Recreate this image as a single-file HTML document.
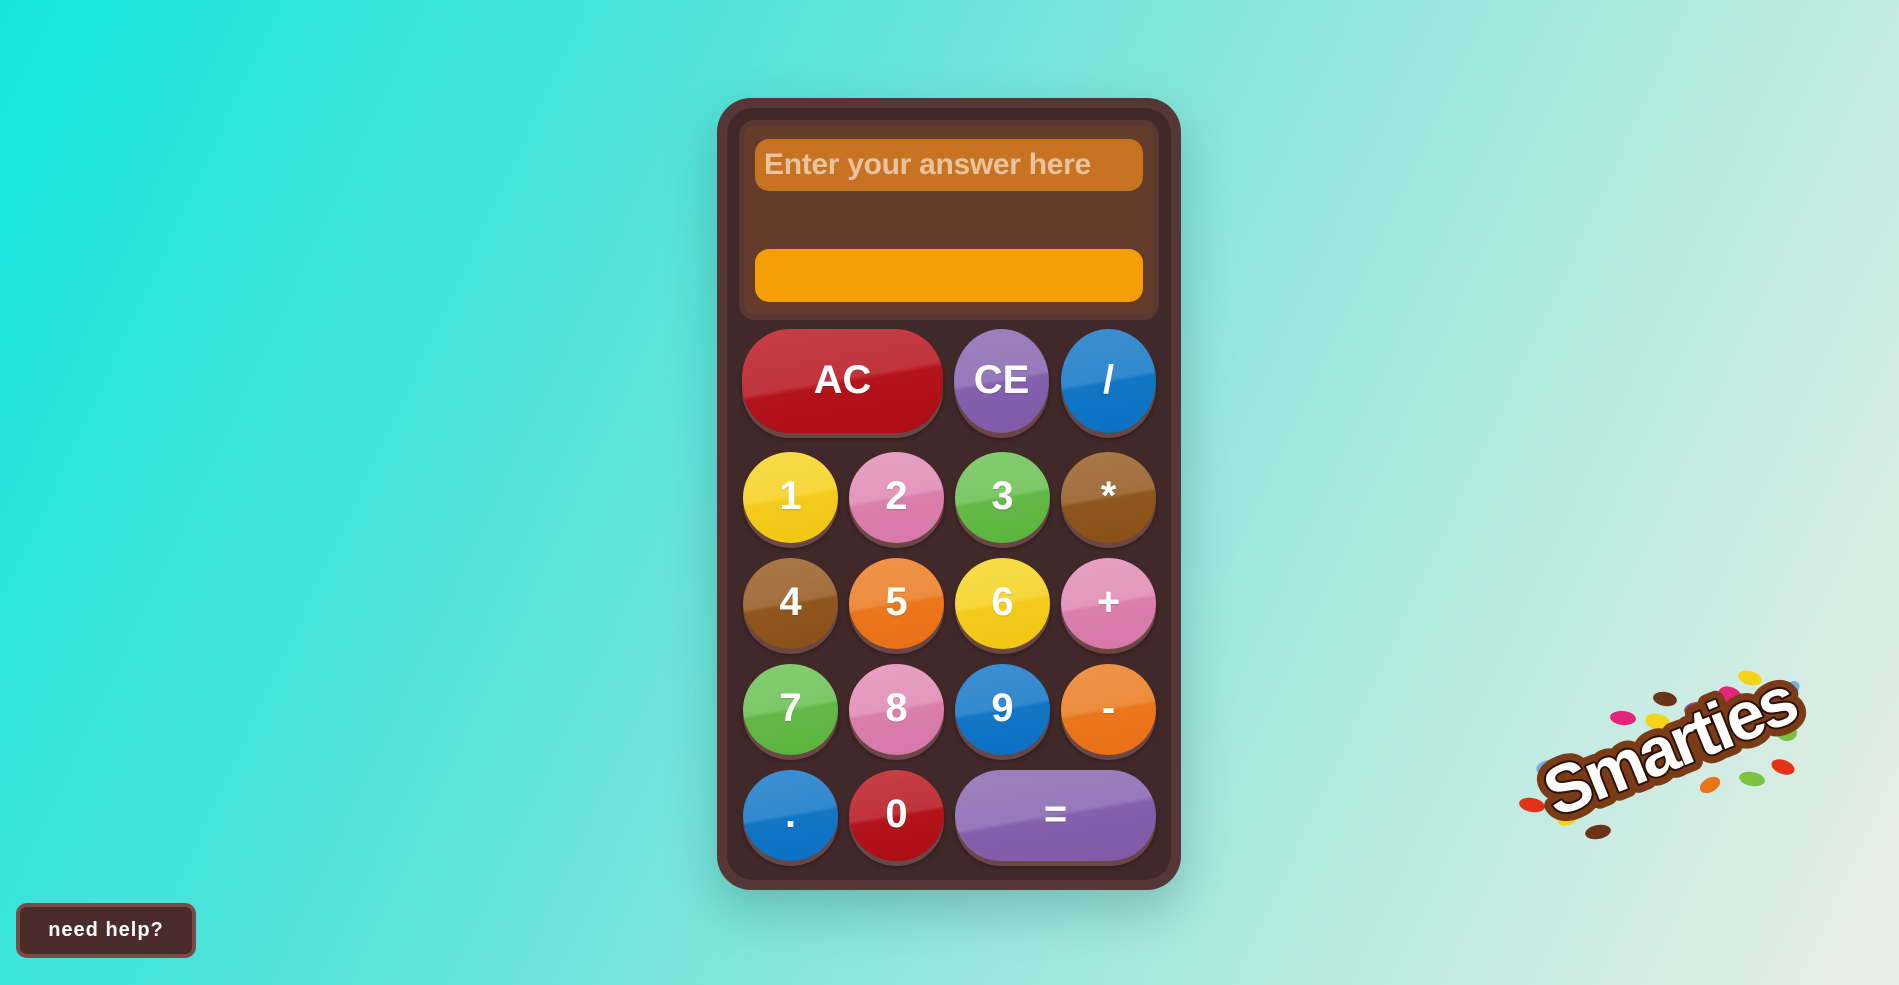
<!DOCTYPE html>
<html><head><meta charset="utf-8"><style>
*{margin:0;padding:0;box-sizing:border-box}
body{width:1899px;height:985px;overflow:hidden;position:relative;font-family:"Liberation Sans",sans-serif;
background:linear-gradient(115deg,#14e6dc 0%,#4fe3da 30%,#8ce6dc 55%,#c0ebe2 80%,#ebeee4 100%);}
.calc{position:absolute;left:717px;top:98px;width:464px;height:792px;background:#573735;border-radius:34px;box-shadow:0 20px 50px rgba(0,60,60,.25)}
.ring{position:absolute;left:10px;top:10px;right:10px;bottom:10px;background:#412829;border-radius:26px}
.panel{position:absolute;left:739px;top:120px;width:420px;height:200px;background:#633c2b;border:5px solid #5a3832;border-radius:16px}
.inp{position:absolute;left:755px;top:139px;width:388px;height:52px;background:#c77321;border-radius:14px;color:#ebc49e;font-weight:bold;font-size:30px;line-height:52px;padding-left:9px;letter-spacing:-.3px}
.bar{position:absolute;left:755px;top:249px;width:388px;height:53px;background:#f59e05;border-radius:14px}
.b{position:absolute;width:95px;height:91px;border-radius:50%;color:#fff;font-weight:bold;font-size:40px;text-align:center;line-height:88px;
box-shadow:0 5px 0 #6a4744,0 6px 4px rgba(0,0,0,.35);text-shadow:0 1px 1px rgba(0,0,0,.15)}
.w{border-radius:48px}
.red{background:linear-gradient(170deg,#c73f45 0%,#c1343c 48%,#b3141c 52%,#ad0c15 100%)}
.pur{background:linear-gradient(170deg,#9c80be 0%,#967abb 48%,#8560ad 52%,#7f5aa8 100%)}
.blu{background:linear-gradient(170deg,#3a90d0 0%,#3389cd 48%,#1276c5 52%,#0b70c2 100%)}
.yel{background:linear-gradient(170deg,#f7dc48 0%,#f6d73c 48%,#f3cb1c 52%,#f1c614 100%)}
.pnk{background:linear-gradient(170deg,#e6a0c3 0%,#e497bd 48%,#da7eac 52%,#d677a8 100%)}
.grn{background:linear-gradient(170deg,#84cc70 0%,#7cc868 48%,#62b846 52%,#5bb43f 100%)}
.brn{background:linear-gradient(170deg,#a97947 0%,#a2703e 48%,#8f561e 52%,#8a5018 100%)}
.org{background:linear-gradient(170deg,#ef944a 0%,#ee8c3e 48%,#ea761c 52%,#e96f15 100%)}
.help{position:absolute;left:16px;top:903px;width:180px;height:55px;background:#4a2c2b;border:4px solid #7b4b48;border-radius:11px;color:#fff;font-weight:bold;font-size:20px;line-height:47px;text-align:center;letter-spacing:1px}
</style></head><body>
<div class="calc"><div class="ring"></div></div>
<div class="panel"></div>
<div class="inp">Enter your answer here</div>
<div class="bar"></div>

<div class="b red w" style="left:742px;top:329px;width:201px;height:104px;line-height:102px">AC</div>
<div class="b pur" style="left:954px;top:329px;height:104px;line-height:102px">CE</div>
<div class="b blu" style="left:1061px;top:329px;height:104px;line-height:102px">/</div>

<div class="b yel" style="left:743px;top:452px">1</div>
<div class="b pnk" style="left:849px;top:452px">2</div>
<div class="b grn" style="left:955px;top:452px">3</div>
<div class="b brn" style="left:1061px;top:452px">*</div>

<div class="b brn" style="left:743px;top:558px">4</div>
<div class="b org" style="left:849px;top:558px">5</div>
<div class="b yel" style="left:955px;top:558px">6</div>
<div class="b pnk" style="left:1061px;top:558px">+</div>

<div class="b grn" style="left:743px;top:664px">7</div>
<div class="b pnk" style="left:849px;top:664px">8</div>
<div class="b blu" style="left:955px;top:664px">9</div>
<div class="b org" style="left:1061px;top:664px">-</div>

<div class="b blu" style="left:743px;top:770px">.</div>
<div class="b red" style="left:849px;top:770px">0</div>
<div class="b pur w" style="left:955px;top:770px;width:201px">=</div>

<div class="help">need help?</div>

<svg style="position:absolute;left:1500px;top:650px" width="320" height="200" viewBox="0 0 320 200">
<g>
<ellipse cx="250" cy="28" rx="12" ry="7" fill="#f3d31c" transform="rotate(15 250 28)"/>
<ellipse cx="290" cy="40" rx="11" ry="7" fill="#6fb3e6" transform="rotate(-40 290 40)"/>
<ellipse cx="230" cy="45" rx="12" ry="8" fill="#e2277a" transform="rotate(20 230 45)"/>
<ellipse cx="165" cy="49" rx="12" ry="7" fill="#6b3318" transform="rotate(10 165 49)"/>
<ellipse cx="196" cy="59" rx="12" ry="7" fill="#8a4ca0" transform="rotate(-10 196 59)"/>
<ellipse cx="123" cy="68" rx="13" ry="7" fill="#e2277a" transform="rotate(5 123 68)"/>
<ellipse cx="158" cy="72" rx="13" ry="8" fill="#f3d31c" transform="rotate(15 158 72)"/>
<ellipse cx="287" cy="83" rx="10" ry="8" fill="#7bc242"/>
<ellipse cx="48" cy="117" rx="12" ry="7" fill="#6fb3e6" transform="rotate(-15 48 117)"/>
<ellipse cx="283" cy="117" rx="12" ry="7" fill="#e23218" transform="rotate(20 283 117)"/>
<ellipse cx="252" cy="129" rx="13" ry="7" fill="#7bc242" transform="rotate(10 252 129)"/>
<ellipse cx="68" cy="145" rx="11" ry="7" fill="#8a4ca0"/>
<ellipse cx="32" cy="155" rx="13" ry="7" fill="#e23218" transform="rotate(10 32 155)"/>
<ellipse cx="68" cy="168" rx="11" ry="7" fill="#f3d31c" transform="rotate(-25 68 168)"/>
<ellipse cx="98" cy="182" rx="13" ry="7" fill="#6b3318" transform="rotate(-10 98 182)"/>
<ellipse cx="210" cy="135" rx="11" ry="7" fill="#ec7414" transform="rotate(-30 210 135)"/>
<text x="178" y="118" text-anchor="middle" font-family="Liberation Sans,sans-serif" font-weight="bold" font-size="68" fill="#fff" stroke="#7a3b16" stroke-width="18" paint-order="stroke" stroke-linejoin="round" transform="rotate(-22 178 118)" letter-spacing="-3">Smarties</text>
<text x="178" y="118" text-anchor="middle" font-family="Liberation Sans,sans-serif" font-weight="bold" font-size="68" fill="#fff" stroke="#2a1208" stroke-width="4" paint-order="stroke" stroke-linejoin="round" transform="rotate(-22 178 118)" letter-spacing="-3">Smarties</text>
</g>
</svg>
</body></html>
